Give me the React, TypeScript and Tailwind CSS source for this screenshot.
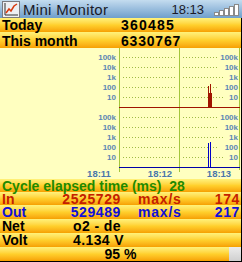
import React from 'react';

const FONT = { fontFamily: '"Liberation Sans", Arial, sans-serif' };

const rowBg = 'bg-linear-to-b from-[#fff27a] via-[#ffd02c] to-[#f6a000]';

function AppIcon() {
    return (
        <svg width="18" height="17" viewBox="0 0 18 17" className="shrink-0">
            <rect x="0.5" y="0.5" width="17" height="16" fill="#eef0f4" stroke="#7a7a80" />
            <path d="M3 2 V14 H16" fill="none" stroke="#303030" strokeWidth="1" />
            <path d="M4 12 L7 8 L9 10 L12 5 L15 3" fill="none" stroke="#d83a10" strokeWidth="1.5" />
        </svg>
    );
}

function Signal() {
    const bars = [3, 5, 7, 9, 11];
    return (
        <svg width="26" height="13" viewBox="0 0 26 13">
            {bars.map((h, i) => (
                <rect key={i} x={i * 5 + 0.5} y={12.5 - h} width="4" height={h} fill="#ffffff" stroke="#8a8a8a" />
            ))}
        </svg>
    );
}

const labels = ['100k', '10k', '1k', '100', '10'];

function Chart() {
    const upper = [9, 19, 29, 39, 49];
    const lower = [69, 79, 89, 99, 109];
    const dotRows = [...upper, ...lower];
    const dots: React.ReactNode[] = [];
    dotRows.forEach((y, r) => {
        for (let x = 123; x <= 176; x += 3) dots.push(<rect key={`a${r}-${x}`} x={x} y={y} width="1" height="1" fill="#9fba45" />);
        const stop = labels[r % 5].length > 2 ? 218 : 222;
        for (let x = 183; x <= stop; x += 3) dots.push(<rect key={`b${r}-${x}`} x={x} y={y} width="1" height="1" fill="#9fba45" />);
    });
    const lbl = { fontFamily: '"Liberation Sans", Arial, sans-serif', fontSize: 8, fontWeight: 700, fill: '#5b86b4' };
    const tm = { fontFamily: '"Liberation Sans", Arial, sans-serif', fontSize: 9.5, fontWeight: 700, fill: '#4a76aa' };
    return (
        <svg width="241" height="131" viewBox="0 0 241 131" className="block">
            <rect x="0" y="0" width="241" height="131" fill="#ffffc0" />
            {dots}
            {dotRows.map((y, i) => (
                <g key={i}>
                    <text x="116" y={y + 3} textAnchor="end" style={lbl}>{labels[i % 5]}</text>
                    <text x="238" y={y + 3} textAnchor="end" style={lbl}>{labels[i % 5]}</text>
                </g>
            ))}
            <rect x="119" y="0" width="1" height="124" fill="#a4c63c" />
            <rect x="179" y="0" width="1" height="124" fill="#a4c63c" />
            <rect x="239" y="0" width="1" height="122" fill="#a4c63c" />
            <rect x="119" y="59" width="121" height="1" fill="#a01400" />
            <rect x="208" y="45" width="4" height="14" fill="#a01400" />
            <rect x="208" y="38" width="1" height="8" fill="#a01400" />
            <rect x="210" y="36" width="1" height="10" fill="#a01400" />
            <rect x="119" y="119" width="121" height="1" fill="#0000a8" />
            <rect x="208" y="95" width="1" height="24" fill="#0000c8" />
            <rect x="210" y="94" width="1" height="25" fill="#0000c8" />
            <text x="99" y="129" textAnchor="middle" style={tm}>18:11</text>
            <text x="160" y="129" textAnchor="middle" style={tm}>18:12</text>
            <text x="219" y="129" textAnchor="middle" style={tm}>18:13</text>
        </svg>
    );
}

export default function App() {
    return (
        <div className="w-[242px] h-[262px] overflow-hidden bg-white" style={FONT}>
            {/* Title bar */}
            <div className="h-[18px] flex items-center bg-linear-to-b from-[#c4dcef] to-[#6f9fcb] pl-[2px] pr-[2px]">
                <AppIcon />
                <span className="ml-[3px] text-[15px] leading-none text-[#1a1a28] tracking-[0.3px]">Mini Monitor</span>
                <span className="ml-auto text-[13px] leading-none text-[#1a1a28]">18:13</span>
                <span className="ml-[10px]"><Signal /></span>
            </div>

            <div className="border-r border-b border-black font-bold text-[14px] leading-[12px]">
                <div className={`h-[14px] flex items-end pb-[1px] ${rowBg}`}>
                    <span className="w-[121px] pl-[2px]">Today</span>
                    <span className="tracking-[1.2px]">360485</span>
                </div>
                <div className={`h-[16px] flex items-start pt-[3px] ${rowBg}`}>
                    <span className="w-[121px] pl-[2px]">This month</span>
                    <span className="tracking-[0.8px]">6330767</span>
                </div>

                <Chart />

                <div className={`h-[13px] flex items-center pl-[2px] text-[#1f8a00] ${rowBg}`}>
                    <span className="whitespace-pre">Cycle elapsed time (ms)  28</span>
                </div>
                <div className={`h-[13px] flex items-center text-[#c42000] ${rowBg}`}>
                    <span className="w-[58px] pl-[2px]">In</span>
                    <span className="w-[63px] text-right tracking-[0.6px]">2525729</span>
                    <span className="ml-[17px] tracking-[0.8px]">max/s</span>
                    <span className="ml-auto pr-[1px] tracking-[0.6px]">174</span>
                </div>
                <div className={`h-[14px] flex items-center text-[#1010d8] ${rowBg}`}>
                    <span className="w-[66px] pl-[2px]">Out</span>
                    <span className="w-[55px] text-right tracking-[0.6px]">529489</span>
                    <span className="ml-[17px] tracking-[0.8px]">max/s</span>
                    <span className="ml-auto pr-[1px] tracking-[0.6px]">217</span>
                </div>
                <div className={`h-[14px] flex items-center text-black ${rowBg}`}>
                    <span className="w-[73px] pl-[2px]">Net</span>
                    <span className="tracking-[0.4px]">o2 - de</span>
                </div>
                <div className={`h-[14px] flex items-center text-black ${rowBg}`}>
                    <span className="w-[73px] pl-[2px]">Volt</span>
                    <span className="tracking-[0.4px]">4.134 V</span>
                </div>
                <div className="h-[14px] flex relative">
                    <div className={`w-[229px] ${rowBg}`} />
                    <div className="flex-1 bg-linear-to-b from-[#ececec] to-[#cfcfcf]" />
                    <span className="absolute inset-0 flex items-center justify-center">95 %</span>
                </div>
            </div>
        </div>
    );
}
